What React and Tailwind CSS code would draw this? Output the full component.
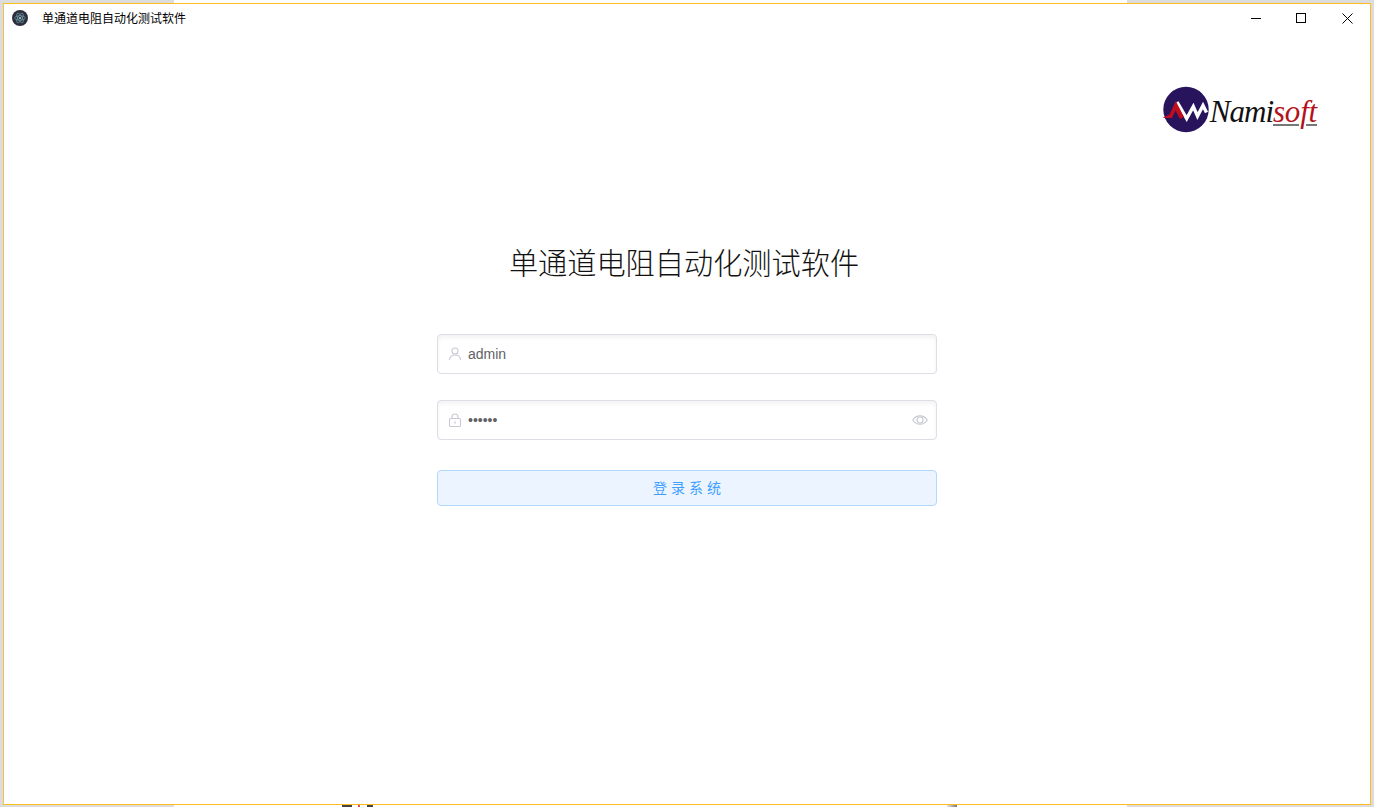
const cjk = "font-['Noto_Sans_CJK_SC','Liberation_Sans',sans-serif]";

function AppIcon() {
  return (
    <svg width="16" height="16" viewBox="0 0 16 16" fill="none">
      <circle cx="8" cy="8" r="8" fill="#2b2e3b" />
      <g stroke="#9feaf9" strokeOpacity="0.55" strokeWidth="0.7" fill="none">
        <ellipse cx="8" cy="8" rx="5.4" ry="2.2" />
        <ellipse cx="8" cy="8" rx="5.4" ry="2.2" transform="rotate(60 8 8)" />
        <ellipse cx="8" cy="8" rx="5.4" ry="2.2" transform="rotate(120 8 8)" />
      </g>
      <circle cx="8" cy="8" r="1" fill="#c4d4da" />
    </svg>
  );
}

function WindowControls() {
  return (
    <div className="flex h-full">
      <button className="w-[46px] flex items-center justify-center">
        <svg width="10" height="10" viewBox="0 0 10 10"><path d="M0 5.5H10" stroke="#000" strokeWidth="1" /></svg>
      </button>
      <button className="w-[46px] pr-[2px] flex items-center justify-center">
        <svg width="10" height="10" viewBox="0 0 10 10"><rect x="0.5" y="0.5" width="9" height="9" fill="none" stroke="#000" strokeWidth="1" /></svg>
      </button>
      <button className="w-[45px] flex items-center justify-center">
        <svg width="11" height="11" viewBox="0 0 11 11"><path d="M0.5 0.5L10.5 10.5M10.5 0.5L0.5 10.5" stroke="#000" strokeWidth="1" /></svg>
      </button>
    </div>
  );
}

function Logo() {
  return (
    <div className="flex items-start h-[50px]">
      <svg width="50" height="50" viewBox="0 0 50 50" className="-mr-[2px] shrink-0">
        <circle cx="24" cy="24.5" r="22.7" fill="#27145c" />
        <path d="M15 17L24.7 33.5L31.3 21.5L35.5 31L41 20.5L44.5 27.5" fill="none" stroke="#fff" strokeWidth="3.4" strokeLinejoin="miter" />
        <path d="M0.5 33L7.5 29.5L13.8 16L22 32L18 34L13.5 25.5L10 33Z" fill="#c00d1e" />
      </svg>
      <div className="font-['Liberation_Serif',serif] italic text-[31px] leading-[50px] text-[#111] mt-[2px] whitespace-nowrap">
        <span className="tracking-[-1px]">Nami</span>
        <span className="text-[#b3121d] tracking-[-0.2px] underline decoration-[#777] decoration-2 underline-offset-[2px]">soft</span>
      </div>
    </div>
  );
}

function UserIcon() {
  return (
    <svg width="14" height="14" viewBox="0 0 14 14" fill="none" stroke="#c8c9d4" strokeWidth="1.1">
      <circle cx="7" cy="4" r="3" />
      <path d="M1.5 13C1.5 9.8 4 8 7 8s5.5 1.8 5.5 5" />
    </svg>
  );
}

function LockIcon() {
  return (
    <svg width="14" height="14" viewBox="0 0 14 14" fill="none" stroke="#c8c9d4" strokeWidth="1.1">
      <rect x="1.5" y="5.5" width="11" height="8" rx="1" />
      <path d="M4 5.5V4a3 3 0 0 1 6 0v1.5" />
      <path d="M7 8.5V10.5" strokeWidth="1.4" />
    </svg>
  );
}

function EyeIcon() {
  return (
    <svg width="16" height="14" viewBox="0 0 16 14" fill="none" stroke="#c8c9d4" strokeWidth="1.2">
      <path d="M0.8 7C2.5 4.2 5 2.8 8 2.8S13.5 4.2 15.2 7C13.5 9.8 11 11.2 8 11.2S2.5 9.8 0.8 7Z" />
      <circle cx="8" cy="7" r="3" />
    </svg>
  );
}

function Field({ icon, type, value, suffix }) {
  return (
    <div className="h-10 rounded border border-[#dcdee8] shadow-[inset_0_3px_4px_rgba(0,0,0,0.05)] flex items-center pl-[10px] pr-[8px]">
      <span className="w-[14px] flex justify-center shrink-0">{icon}</span>
      <input
        readOnly
        type={type}
        value={value}
        className="flex-1 min-w-0 ml-[6px] text-sm text-[#606266] font-['Liberation_Sans',sans-serif] outline-none bg-transparent"
      />
      {suffix}
    </div>
  );
}

export default function App() {
  return (
    <div className="w-[1374px] h-[807px] flex flex-col pt-[3px] bg-[linear-gradient(to_right,#dcdcdc_174px,#ffffff_174px,#ffffff_1127px,#dcdcdc_1127px)] overflow-hidden">
      <div className="flex-1 min-h-0 mx-[3px] border border-[#fdbd1c] border-l-[#f0c14b] bg-white flex flex-col">
        <div className={`h-[28px] flex items-center justify-between shrink-0 ${cjk}`}>
          <div className="flex items-center pl-2">
            <AppIcon />
            <span className="ml-[14px] text-xs text-black">单通道电阻自动化测试软件</span>
          </div>
          <WindowControls />
        </div>

        <div className="flex justify-end pt-[53px] pr-[53px]">
          <Logo />
        </div>

        <h1 className={`mt-[104px] pr-[6px] text-center text-[29.2px] leading-[44px] font-light text-[#111] ${cjk}`}>
          单通道电阻自动化测试软件
        </h1>

        <div className="w-[500px] mx-auto mt-[51px] flex flex-col">
          <Field icon={<UserIcon />} type="text" value="admin" />
          <div className="mt-[26px]">
            <Field icon={<LockIcon />} type="password" value="123456" suffix={<EyeIcon />} />
          </div>
          <button className={`mt-[30px] h-9 pl-[4px] pb-[2px] rounded border border-[#b3d8ff] bg-[#ecf5ff] text-[#409eff] text-sm tracking-[4px] ${cjk}`}>
            登录系统
          </button>
        </div>
      </div>

      {/* sliver of whatever sits behind the window */}
      <div className="h-[2px] shrink-0 flex">
        <div className="w-[342px] bg-[linear-gradient(to_right,#dcdcdc_174px,#ffffff_174px)]" />
        <div className="w-[10px] bg-[#444]" />
        <div className="w-[6px] bg-white" />
        <div className="w-[2px] bg-[#d9503f]" />
        <div className="w-[7px] bg-white" />
        <div className="w-[6px] bg-[#444]" />
        <div className="w-[574px] bg-white" />
        <div className="w-[10px] bg-[linear-gradient(to_right,#e5e5e5,#777)]" />
        <div className="flex-1 bg-[linear-gradient(to_right,#ffffff_170px,#dcdcdc_170px)]" />
      </div>
    </div>
  );
}
